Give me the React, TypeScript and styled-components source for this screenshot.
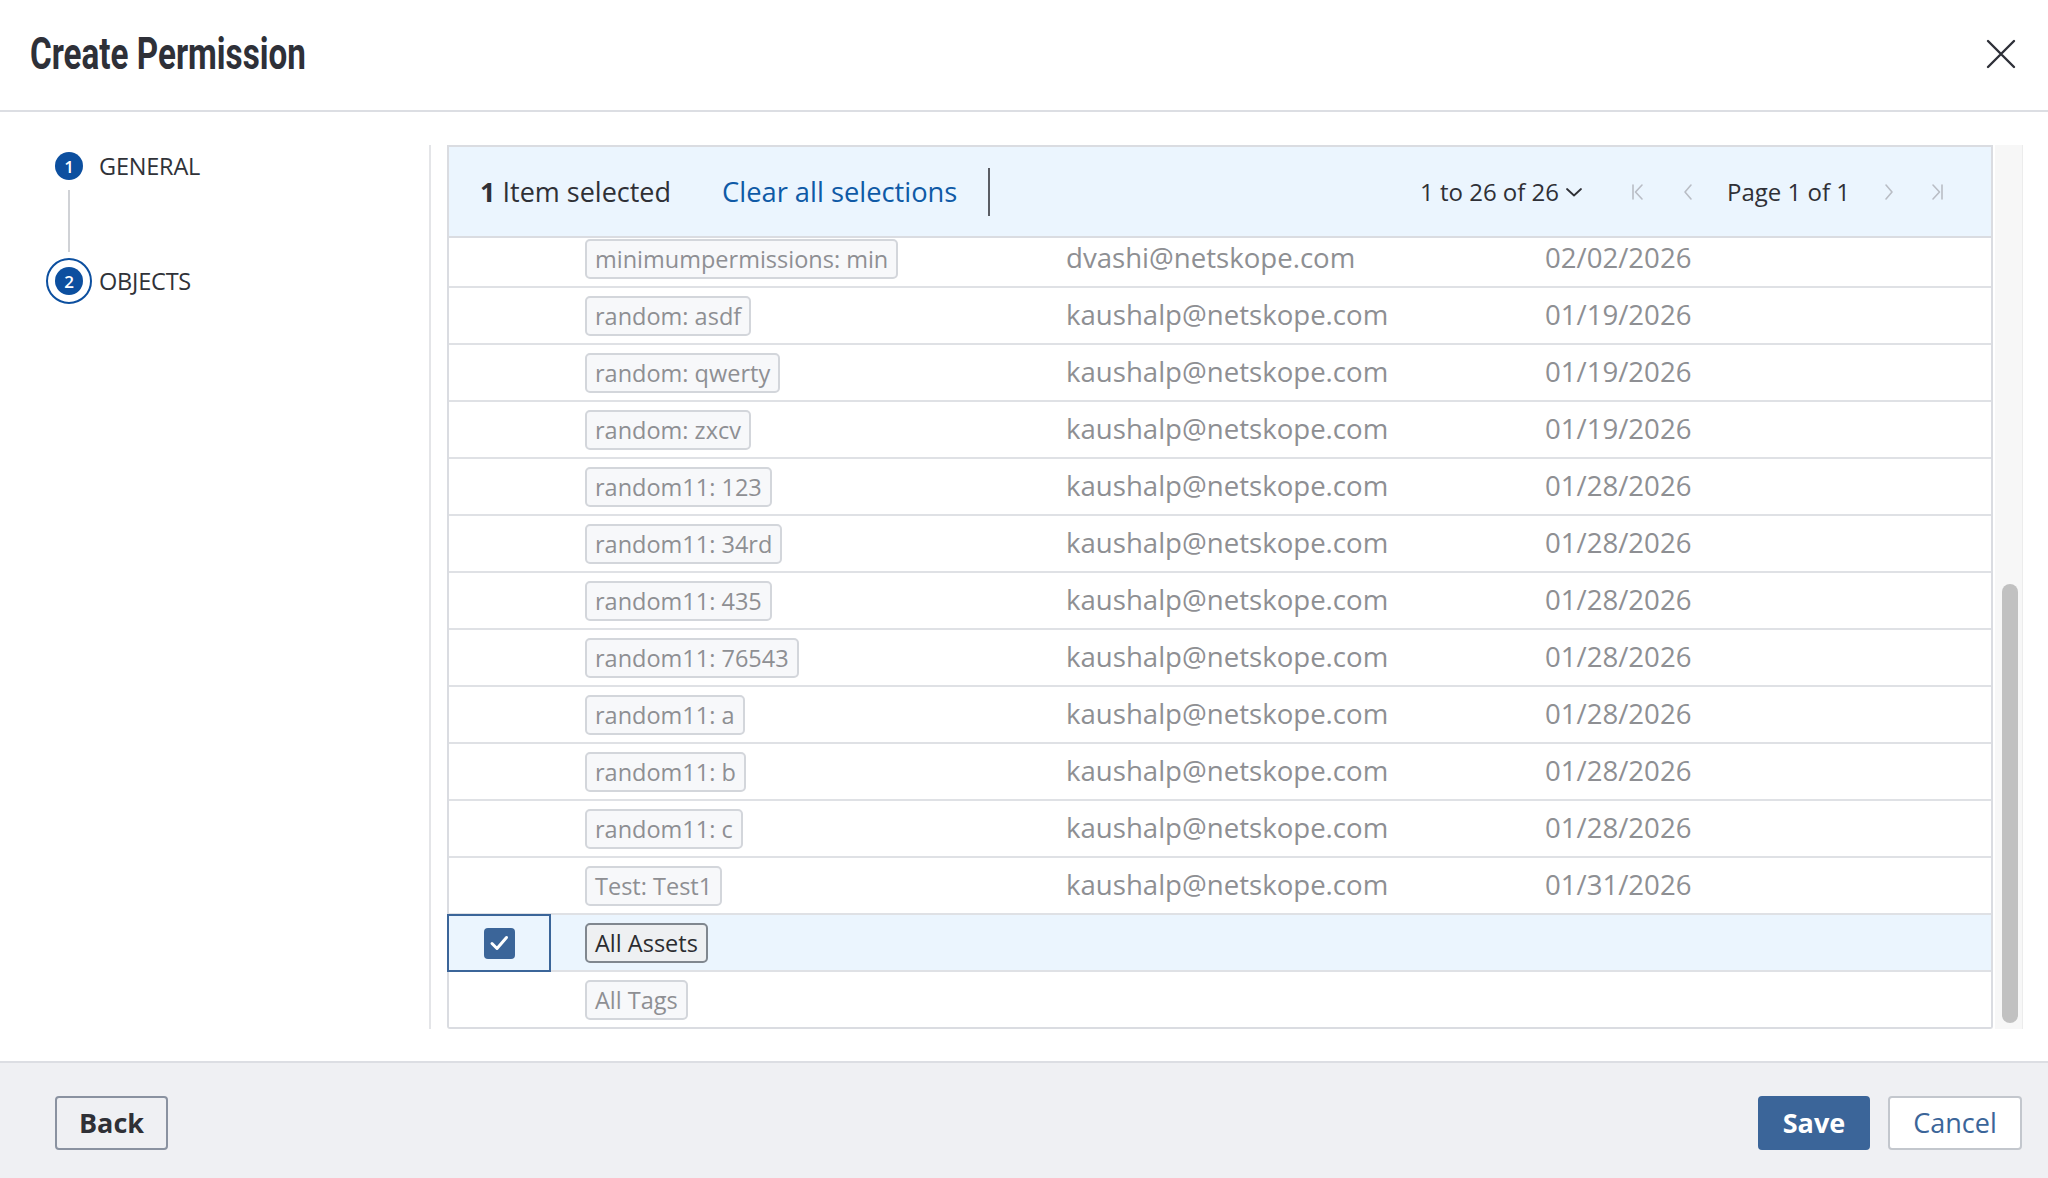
import React, { useEffect, useRef } from 'react';
import styled, { createGlobalStyle } from 'styled-components';

// --- Global ---
const GlobalStyle = createGlobalStyle`
  html, body { margin: 0; padding: 0; height: 100%; background: #fff; }
  #root { height: 100%; }
  * { box-sizing: border-box; }
  body { font-family: "Open Sans", "Liberation Sans", sans-serif; color: #333; }
`;

// --- Layout ---
const Page = styled.div`
  height: 100vh; display: flex; flex-direction: column; background: #fff;
`;
const Header = styled.header`
  height: 112px; flex: 0 0 112px; display: flex; align-items: center; justify-content: space-between;
  padding: 0 32px 2px 30px; border-bottom: 2px solid #dcdee3;
`;
// no hay fuente condensada instalada: se estrecha Roboto
const Title = styled.h1`
  margin: 0; font-family: "Roboto", "Liberation Sans", sans-serif; font-size: 44px; font-weight: 700;
  color: #2e3038; transform: scaleX(0.755); transform-origin: left center; white-space: nowrap;
`;
const CloseButton = styled.button`
  background: none; border: none; padding: 0; width: 30px; height: 30px; cursor: pointer; display: flex;
`;
const Body = styled.div`
  flex: 1; display: flex; min-height: 0; padding: 33px 25px 32px 0;
`;

// --- Steps sidebar ---
const Sidebar = styled.nav`
  width: 431px; flex: 0 0 431px; border-right: 2px solid #e4e5e8; padding: 0 0 0 46px;
`;
const Steps = styled.div`
  margin-top: -2px;
`;
const Step = styled.div`
  display: flex; align-items: center; height: 46px;
`;
const StepIcon = styled.div`
  width: 46px; height: 46px; display: flex; align-items: center; justify-content: center; flex: 0 0 46px;
`;
const StepRing = styled.div<{ $active?: boolean }>`
  width: 46px; height: 46px; border-radius: 50%; display: flex; align-items: center; justify-content: center;
  border: 2.5px solid ${p => (p.$active ? '#0c4f9f' : 'transparent')};
`;
const StepDot = styled.div`
  width: 28px; height: 28px; border-radius: 50%; background: #0c4f9f; color: #fff;
  font-size: 17px; font-weight: 600; display: flex; align-items: center; justify-content: center; line-height: 1;
`;
const StepLabel = styled.span`
  font-size: 23.5px; color: #303238; margin-left: 7px; letter-spacing: -0.2px;
`;
const Connector = styled.div`
  width: 2px; height: 62px; background: #d0d2d6; margin: 1px 0 6px 22px;
`;

// --- Table area ---
const Main = styled.section`
  flex: 1; display: flex; min-width: 0; padding-left: 16px;
`;
const Scroller = styled.div`
  flex: 1; overflow-y: auto; scrollbar-width: none;
  &::-webkit-scrollbar { display: none; }
`;
const Panel = styled.div`
  border: 2px solid #dadce1; border-top: none; border-radius: 0 0 3px 3px; background: #fff;
`;
const Toolbar = styled.div`
  position: sticky; top: 0; z-index: 2; height: 93px; display: flex; align-items: center;
  background: #ebf5fe; border: 2px solid #dadce1; margin: 0 -2px;
  padding: 0 47px 0 31px;
`;
const SelectedText = styled.span`
  font-size: 27px; color: #2f3036;
  b { font-weight: 700; }
`;
const ClearLink = styled.a`
  font-size: 27.3px; color: #0f5aa6; margin-left: 51px; cursor: pointer; text-decoration: none;
`;
const Divider = styled.span`
  width: 2px; height: 48px; background: #5a5d64; margin-left: 31px;
`;
const Pager = styled.div`
  margin-left: auto; display: flex; align-items: center; font-size: 24px; color: #2f3036;
`;
const RangeText = styled.span`
  display: flex; align-items: center; gap: 6px;
`;
const PageText = styled.span`
  margin: 0 34px 0 34px;
`;
const NavIcon = styled.span<{ $gap?: number }>`
  display: flex; margin-left: ${p => p.$gap ?? 0}px;
`;

const Row = styled.div<{ $selected?: boolean }>`
  display: grid; grid-template-columns: 100px 481px 479px 1fr; align-items: center;
  height: 57px; border-bottom: 2px solid #dfe1e5; background: ${p => (p.$selected ? '#ebf5fe' : '#fff')};
  &:last-child { border-bottom: none; height: 55px; }
`;
const CheckCell = styled.div<{ $focused?: boolean }>`
  height: 100%; display: flex; align-items: center; justify-content: center;
  ${p => p.$focused && 'border: 2px solid #3b6599; margin: -1px 0 -2px -2px; height: calc(100% + 3px); width: calc(100% + 4px);'}
`;
const Checkbox = styled.span`
  width: 31px; height: 31px; border-radius: 4px; background: #3b6599; display: flex; align-items: center; justify-content: center;
`;
const TagCell = styled.div`
  padding-left: 36px; display: flex;
`;
const Chip = styled.span<{ $strong?: boolean }>`
  display: inline-block; height: 40px; line-height: 36px; padding: 0 8px; border-radius: 5px; font-size: 23.5px;
  border: 2px solid ${p => (p.$strong ? '#80878f' : '#d3d6db')};
  background: ${p => (p.$strong ? '#eef0f2' : '#f7f8fa')};
  color: ${p => (p.$strong ? '#2b2c30' : '#8e8f93')};
  white-space: nowrap;
`;
const TextCell = styled.div`
  padding-left: 36px; font-size: 27.6px; color: #8e8f93; white-space: nowrap; margin-top: -3px;
`;

const ScrollTrack = styled.div`
  width: 28px; flex: 0 0 28px; margin-left: 2px; background: #f7f7f7; border-right: 1px solid #ececec;
  display: flex; flex-direction: column; justify-content: flex-end; padding: 6px 5px 6px 7px;
`;
const ScrollThumb = styled.div`
  width: 16px; border-radius: 8px; background: #c1c1c1;
`;

// --- Footer ---
const Footer = styled.footer`
  height: 117px; flex: 0 0 117px; background: #eff0f3; border-top: 2px solid #dcdee3;
  display: flex; align-items: center; padding: 4px 26px 0 55px;
`;
const Button = styled.button<{ $variant?: 'primary' | 'ghost' | 'outline' }>`
  height: 54px; border-radius: 4px; font-family: "Open Sans", sans-serif; font-size: 27px; cursor: pointer; padding: 0;
  ${p => p.$variant === 'primary' && 'background: #3b6599; color: #fff; border: 2px solid #3b6599; font-weight: 700; margin-left: auto; width: 112px;'}
  ${p => p.$variant === 'outline' && 'background: #fff; color: #3b6599; border: 2px solid #c3c7cd; margin-left: 18px; width: 134px;'}
  ${p => p.$variant === 'ghost' && 'background: transparent; color: #2f3036; border: 2px solid #8a92a0; font-weight: 700; width: 113px;'}
`;

// --- Data ---
interface Item { tag: string; user?: string; date?: string; selected?: boolean; strong?: boolean }

const K = 'kaushalp@netskope.com';
const D = 'dvashi@netskope.com';
const items: Item[] = [
  { tag: 'app: crm', user: D, date: '01/12/2026' },
  { tag: 'app: erp', user: D, date: '01/12/2026' },
  { tag: 'backup: daily', user: K, date: '01/14/2026' },
  { tag: 'cost-center: 1001', user: K, date: '01/14/2026' },
  { tag: 'department: finance', user: D, date: '01/15/2026' },
  { tag: 'department: hr', user: D, date: '01/15/2026' },
  { tag: 'env: dev', user: K, date: '01/16/2026' },
  { tag: 'env: prod', user: K, date: '01/16/2026' },
  { tag: 'env: staging', user: K, date: '01/16/2026' },
  { tag: 'location: us-east', user: K, date: '01/17/2026' },
  { tag: 'location: us-west', user: K, date: '01/17/2026' },
  { tag: 'minimumpermissions: max', user: D, date: '02/02/2026' },
  { tag: 'minimumpermissions: min', user: D, date: '02/02/2026' },
  { tag: 'random: asdf', user: K, date: '01/19/2026' },
  { tag: 'random: qwerty', user: K, date: '01/19/2026' },
  { tag: 'random: zxcv', user: K, date: '01/19/2026' },
  { tag: 'random11: 123', user: K, date: '01/28/2026' },
  { tag: 'random11: 34rd', user: K, date: '01/28/2026' },
  { tag: 'random11: 435', user: K, date: '01/28/2026' },
  { tag: 'random11: 76543', user: K, date: '01/28/2026' },
  { tag: 'random11: a', user: K, date: '01/28/2026' },
  { tag: 'random11: b', user: K, date: '01/28/2026' },
  { tag: 'random11: c', user: K, date: '01/28/2026' },
  { tag: 'Test: Test1', user: K, date: '01/31/2026' },
  { tag: 'All Assets', selected: true, strong: true },
  { tag: 'All Tags' },
];

// --- Icons ---
const CloseIcon = () => (
  <svg width="30" height="30" viewBox="0 0 30 30">
    <path d="M2 2 L28 28 M28 2 L2 28" stroke="#2e3038" strokeWidth="2.4" strokeLinecap="round" />
  </svg>
);
const Chevron = ({ d, w = 14 }: { d: string; w?: number }) => (
  <svg width={w} height="18" viewBox={`0 0 ${w} 18`} fill="none">
    <path d={d} stroke="#b9bdc5" strokeWidth="1.6" strokeLinecap="round" strokeLinejoin="round" />
  </svg>
);
const CheckIcon = () => (
  <svg width="22" height="22" viewBox="0 0 22 22" fill="none">
    <path d="M4 11.5 L9 16.5 L18.5 5.5" stroke="#fff" strokeWidth="3" strokeLinecap="round" strokeLinejoin="round" />
  </svg>
);

const App: React.FC = () => {
  const scrollRef = useRef<HTMLDivElement>(null);

  // la lista arranca scrolleada al final, como en la captura
  useEffect(() => {
    if (scrollRef.current) scrollRef.current.scrollTop = scrollRef.current.scrollHeight;
  }, []);

  return (
    <Page>
      <GlobalStyle />
      <Header>
        <Title>Create Permission</Title>
        <CloseButton aria-label="Close"><CloseIcon /></CloseButton>
      </Header>

      <Body>
        <Sidebar>
          <Steps>
            <Step>
              <StepIcon><StepDot>1</StepDot></StepIcon>
              <StepLabel>GENERAL</StepLabel>
            </Step>
            <Connector />
            <Step>
              <StepIcon><StepRing $active><StepDot>2</StepDot></StepRing></StepIcon>
              <StepLabel>OBJECTS</StepLabel>
            </Step>
          </Steps>
        </Sidebar>

        <Main>
          <Scroller ref={scrollRef}>
            <Panel>
              <Toolbar>
                <SelectedText><b>1</b> Item selected</SelectedText>
                <ClearLink>Clear all selections</ClearLink>
                <Divider />
                <Pager>
                  <RangeText>
                    1 to 26 of 26
                    <svg width="18" height="12" viewBox="0 0 18 12" fill="none">
                      <path d="M2 3 L9 9.5 L16 3" stroke="#2f3036" strokeWidth="1.8" strokeLinecap="round" strokeLinejoin="round" />
                    </svg>
                  </RangeText>
                  <NavIcon $gap={48}><Chevron d="M2 2 V16 M11 2 L4.5 9 L11 16" /></NavIcon>
                  <NavIcon $gap={38}><Chevron w={10} d="M8 2 L2 9 L8 16" /></NavIcon>
                  <PageText>Page 1 of 1</PageText>
                  <NavIcon><Chevron w={10} d="M2 2 L8 9 L2 16" /></NavIcon>
                  <NavIcon $gap={36}><Chevron d="M3 2 L9.5 9 L3 16 M12 2 V16" /></NavIcon>
                </Pager>
              </Toolbar>

              {items.map(item => (
                <Row key={item.tag} $selected={item.selected}>
                  <CheckCell $focused={item.selected}>
                    {item.selected && <Checkbox><CheckIcon /></Checkbox>}
                  </CheckCell>
                  <TagCell><Chip $strong={item.strong}>{item.tag}</Chip></TagCell>
                  <TextCell>{item.user}</TextCell>
                  <TextCell>{item.date}</TextCell>
                </Row>
              ))}
            </Panel>
          </Scroller>
          <ScrollTrack>
            <ScrollThumb style={{ height: 439 }} />
          </ScrollTrack>
        </Main>
      </Body>

      <Footer>
        <Button $variant="ghost">Back</Button>
        <Button $variant="primary">Save</Button>
        <Button $variant="outline">Cancel</Button>
      </Footer>
    </Page>
  );
};

export default App;
